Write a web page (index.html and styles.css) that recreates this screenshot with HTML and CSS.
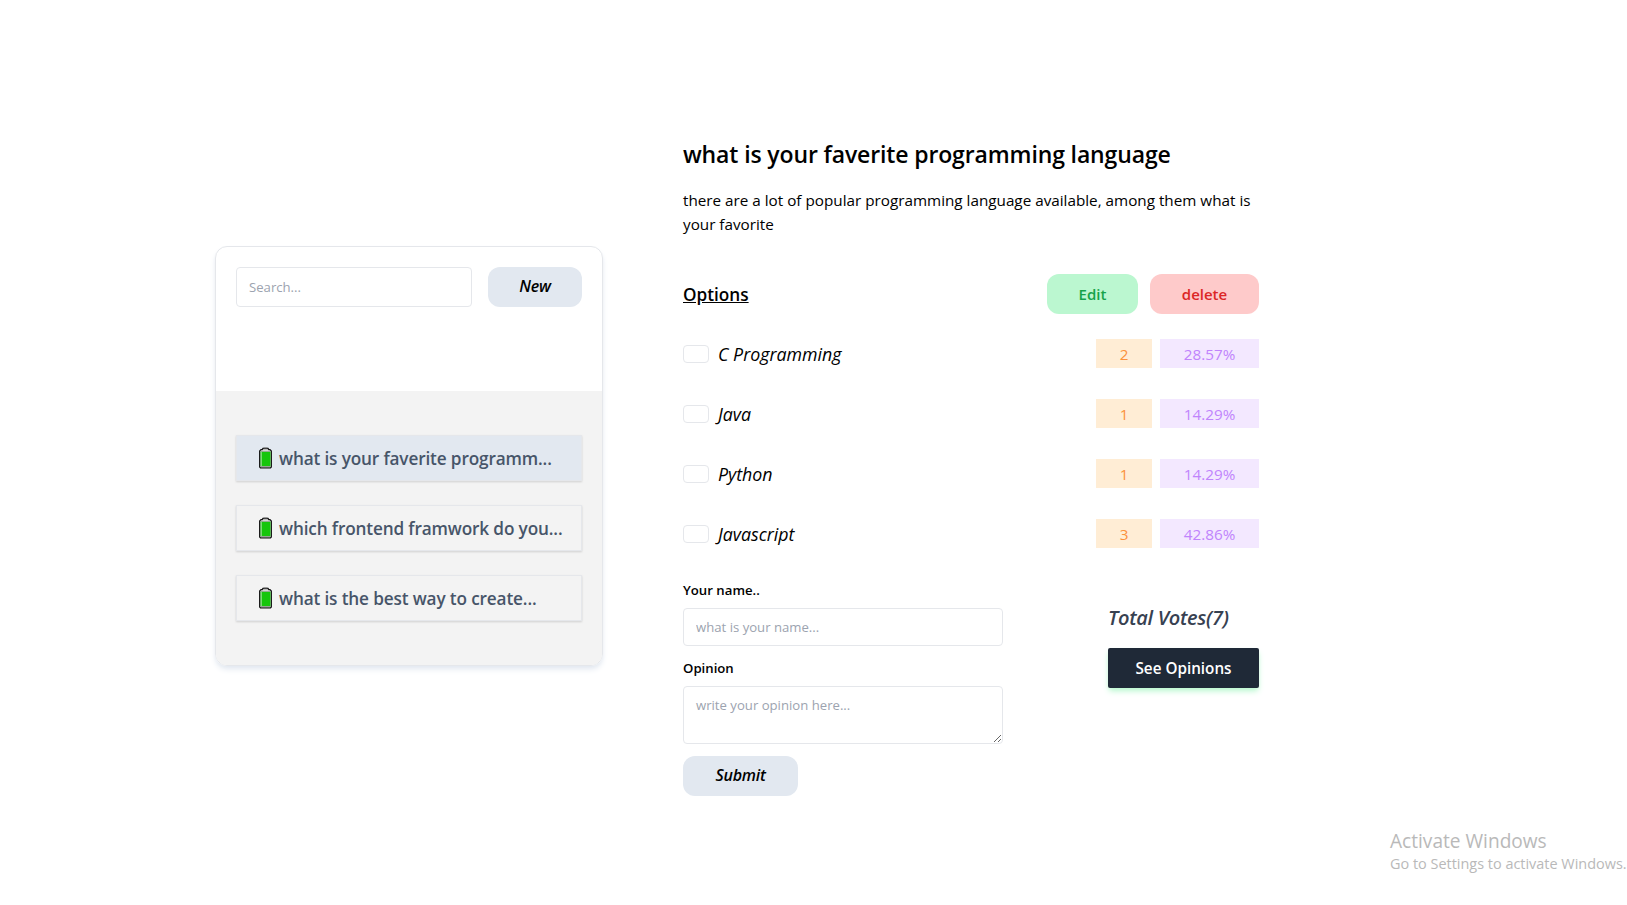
FILE: index.html
```html
<!DOCTYPE html>
<html lang="en">
<head>
<meta charset="utf-8">
<title>Polls</title>
<link rel="stylesheet" href="styles.css">
</head>
<body>
<svg width="0" height="0" class="defs" aria-hidden="true">
  <symbol id="battery" viewBox="0 0 14 22">
    <path d="M4 1.500h5l.8 1.200h1.200l1.300 1.300v16l-.8.800H1.500l-.8-.8v-16l1.300-1.300h1.200z" fill="#f2f2f2" stroke="#111" stroke-width="1.300"/>
    <path d="M4.500 1h4" stroke="#777" stroke-width="1"/>
    <path d="M1.500 4.500h10v15h-10z" fill="#16c60c"/>
    <path d="M2.500 5v14" stroke="#7bdc75" stroke-width="1"/>
    <path d="M1.500 4.200h10M1.500 19.700h10" stroke="#999" stroke-width="1"/>
  </symbol>
</svg>
<main class="page">
  <aside class="panel">
    <div class="toolbar">
      <input class="field search" type="text" placeholder="Search...">
      <button class="btn primary new">New</button>
    </div>
    <ul class="polls">
      <li class="poll active"><svg class="battery"><use href="#battery"/></svg><span class="poll-title">what is your faverite programm...</span></li>
      <li class="poll"><svg class="battery"><use href="#battery"/></svg><span class="poll-title">which frontend framwork do you...</span></li>
      <li class="poll"><svg class="battery"><use href="#battery"/></svg><span class="poll-title">what is the best way to create...</span></li>
    </ul>
  </aside>
  <section class="detail">
    <h1 class="title">what is your faverite programming language</h1>
    <p class="description">there are a lot of popular programming language available, among them what is<br>your favorite</p>
    <div class="options-head">
      <h2 class="options-title">Options</h2>
      <div class="actions">
        <button class="btn edit">Edit</button>
        <button class="btn delete">delete</button>
      </div>
    </div>
    <ul class="options">
      <li class="option"><span class="check"></span><span class="name">C Programming</span><span class="count">2</span><span class="percent">28.57%</span></li>
      <li class="option"><span class="check"></span><span class="name">Java</span><span class="count">1</span><span class="percent">14.29%</span></li>
      <li class="option"><span class="check"></span><span class="name">Python</span><span class="count">1</span><span class="percent">14.29%</span></li>
      <li class="option"><span class="check"></span><span class="name">Javascript</span><span class="count">3</span><span class="percent">42.86%</span></li>
    </ul>
    <div class="bottom">
      <form class="opinion-form">
        <label class="label" for="name">Your name..</label>
        <input class="field name-field" id="name" type="text" placeholder="what is your name...">
        <label class="label" for="opinion">Opinion</label>
        <textarea class="field opinion-field" id="opinion" placeholder="write your opinion here..."></textarea>
        <button class="btn primary submit" type="button">Submit</button>
      </form>
      <div class="summary">
        <h3 class="total">Total Votes(7)</h3>
        <button class="see">See Opinions</button>
      </div>
    </div>
  </section>
</main>
<div class="watermark">
  <div class="wm-title">Activate Windows</div>
  <div class="wm-text">Go to Settings to activate Windows.</div>
</div>
</body>
</html>
```
FILE: styles.css
```css
* { box-sizing: border-box; margin: 0; padding: 0; }
body {
  height: 905px;
  overflow: hidden;
  background: #fff;
  color: #000;
  font: 15.25px/24px "Open Sans", "Noto Sans", sans-serif;
}
ul { list-style: none; }
button, input, textarea { font: inherit; letter-spacing: inherit; border: 0; }
.defs { position: absolute; }
.page { display: flex; align-items: flex-start; gap: 80px; padding: 137px 0 0 215px; }

.panel {
  width: 388px;
  height: 420px;
  margin-top: 109px;
  border: 1px solid #e5e7eb;
  border-radius: 12px;
  overflow: hidden;
  box-shadow: 0 4px 6px -1px #e2e8f0, 0 2px 4px -2px #e2e8f0;
}
.toolbar { display: flex; gap: 16px; height: 144px; padding: 20px; }
.field {
  display: block;
  border: 1px solid #e5e7eb;
  border-radius: 4px;
  padding: 0 12px;
  background: #fff;
  font-size: 13.15px;
  line-height: 20px;
  outline: 0;
}
.field::placeholder { color: #9ca3af; opacity: 1; }
.search { width: 236px; height: 40px; }
.btn { height: 40px; border-radius: 12px; font-size: 15px; font-weight: 540; }
.primary { padding-bottom: 2px; background: #e2e8f0; font-size: 16px; font-weight: 650; font-style: italic; letter-spacing: -0.25px; }
.new { width: 94px; }
.polls { display: grid; align-content: start; gap: 24px; height: 274px; padding: 44px 20px; background: #f3f3f3; }
.poll {
  display: flex;
  align-items: center;
  gap: 6px;
  height: 46px;
  padding-left: 22px;
  border: 1px solid #e5e7eb;
  box-shadow: 0 1px 2px rgba(0, 0, 0, .15);
  color: #475569;
  font-size: 17.2px;
  letter-spacing: -0.14px;
  font-weight: 550;
  white-space: nowrap;
}
.poll-title { padding-top: 1px; }
.active { background: #e2e8f0; }
.battery { width: 14px; height: 22px; }

.detail { width: 576px; }
.title { padding-top: 1px; font-size: 23px; letter-spacing: -0.13px; line-height: 32px; font-weight: 550; white-space: nowrap; }
.description { margin-top: 18px; white-space: nowrap; }
.options-head { display: flex; justify-content: space-between; align-items: center; height: 40px; margin-top: 38px; }
.options-title { padding-top: 1px; font-size: 17.2px; font-weight: 550; text-decoration: underline; }
.actions { display: flex; gap: 12px; }
.edit { width: 91px; background: #bbf7d0; color: #16a34a; }
.delete { width: 109px; background: #fecaca; color: #dc2626; }
.options { display: grid; gap: 31px; margin-top: 25px; }
.option { display: flex; align-items: center; height: 29px; }
.check { width: 26px; height: 18px; border: 1px solid #e5e7eb; border-radius: 4px; }
.name { flex: 1; margin-left: 9px; padding-top: 1px; font-size: 17.8px; font-style: italic; }
.count, .percent { height: 29px; line-height: 31px; text-align: center; }
.count { width: 56px; background: #ffedd5; color: #fb923c; }
.percent { width: 99px; margin-left: 8px; background: #f3e8ff; color: #c084fc; }
.bottom { display: flex; justify-content: space-between; margin-top: 32px; }
.opinion-form { width: 320px; }
.label { display: block; font-size: 13.2px; line-height: 20px; font-weight: 570; }
.name-field { width: 320px; height: 38px; margin: 8px 0 12px; }
.opinion-field { width: 320px; height: 58px; margin: 8px 0 12px; padding: 8px 12px; resize: vertical; }
.submit { width: 115px; }
.summary { width: 151px; padding-top: 24px; }
.total { font-size: 20px; line-height: 28px; font-weight: 640; font-style: italic; letter-spacing: -0.3px; color: #374151; white-space: nowrap; }
.see {
  width: 151px;
  height: 40px;
  margin-top: 16px;
  border-radius: 2px;
  background: #1f2937;
  color: #fff;
  font-weight: 600;
  box-shadow: 0 4px 6px -1px #bbf7d0, 0 2px 4px -2px #bbf7d0;
}
.watermark { position: absolute; left: 1390px; top: 828px; color: #b9b9b9; white-space: nowrap; }
.wm-title { font-size: 19.1px; line-height: 26px; }
.wm-text { font-size: 14.45px; line-height: 19px; }
```
